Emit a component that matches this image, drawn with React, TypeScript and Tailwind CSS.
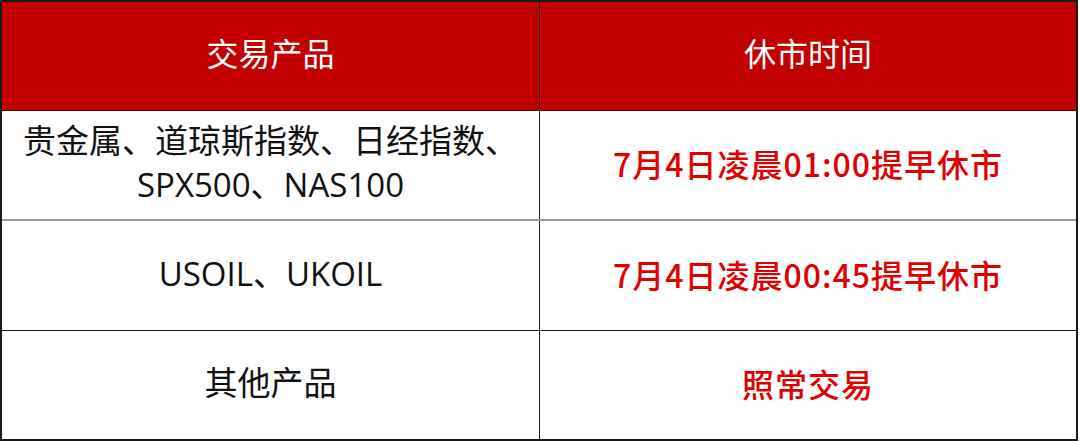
import React from 'react';

interface Row {
  product: string[];
  time: string;
  border: string;
  height: string;
}

const rows: Row[] = [
  {
    product: ['贵金属、道琼斯指数、日经指数、', 'SPX500、NAS100'],
    time: '7月4日凌晨01:00提早休市',
    border: 'border-b-2 border-[#9a9a9a]',
    height: 'h-[110px]',
  },
  {
    product: ['USOIL、UKOIL'],
    time: '7月4日凌晨00:45提早休市',
    border: 'border-b border-[#1a1a1a]',
    height: 'h-[110px]',
  },
  {
    product: ['其他产品'],
    time: '照常交易',
    border: '',
    height: 'flex-1',
  },
];

const App: React.FC = () => {
  return (
    <div className="w-[1080px] h-[442px] bg-white font-['Open_Sans','Noto_Sans_CJK_SC',sans-serif]">
      <div className="w-[1078px] h-[441px] border-2 border-[#1a1a1a] flex flex-col">
        {/* Header */}
        <div className="h-[109px] flex bg-[#c20000] border-b border-[#5a0000] text-white text-[32px]">
          <div className="w-[538px] border-r border-[#1a1a1a] flex items-center justify-center pb-1">
            交易产品
          </div>
          <div className="flex-1 flex items-center justify-center pb-1">休市时间</div>
        </div>

        {rows.map((row, i) => (
          <div key={i} className={`flex ${row.height} ${row.border}`}>
            <div className="w-[538px] border-r border-[#1a1a1a] flex flex-col items-center justify-center text-[33px] leading-[44px] text-[#111] pb-1">
              {row.product.map((line, j) => (
                <div key={j}>{line}</div>
              ))}
            </div>
            <div className="flex-1 flex items-center justify-center font-['Noto_Sans_CJK_SC',sans-serif] text-[32px] tracking-[1px] font-medium text-[#e00000] pb-1">
              {row.time}
            </div>
          </div>
        ))}
      </div>
    </div>
  );
};

export default App;
